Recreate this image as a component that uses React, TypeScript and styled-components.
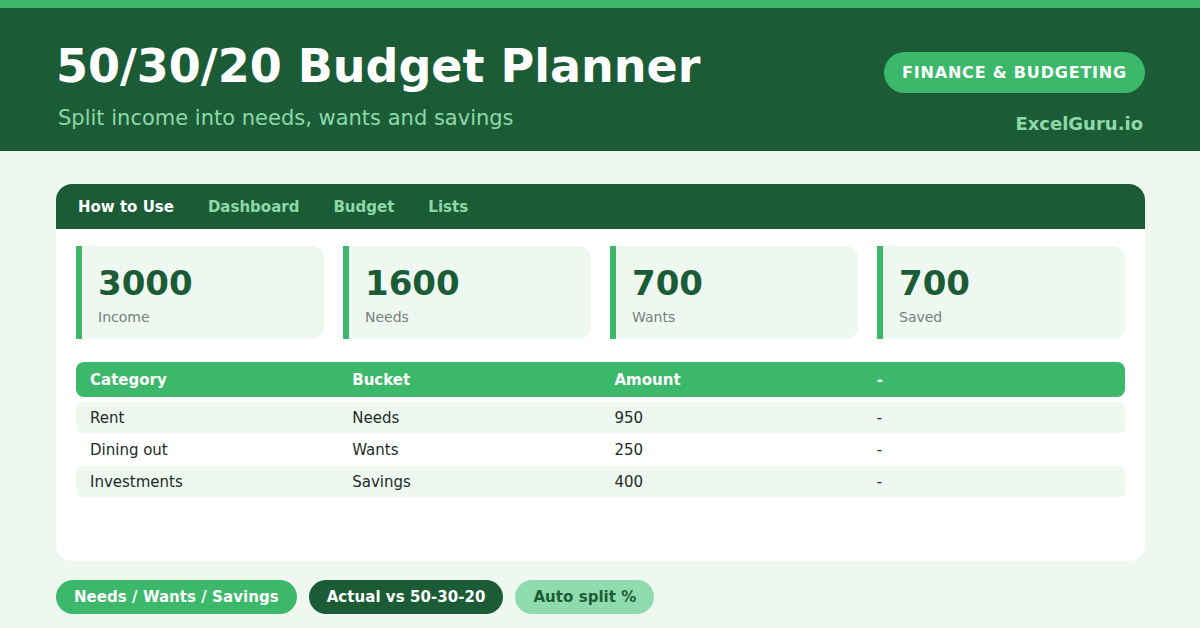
import React from "react";
import styled, { createGlobalStyle } from "styled-components";

const C = {
  dark: "#1b5c37",
  green: "#3bb86a",
  light: "#eef8f1",
  mint: "#8ed8a8",
  chipMint: "#8edcad",
  text: "#222b26",
  muted: "#74817a",
};

const Global = createGlobalStyle`
  html, body { margin: 0; padding: 0; }
  body {
    width: 1200px;
    height: 628px;
    overflow: hidden;
    background: ${C.light};
    font-family: "DejaVu Sans", "Liberation Sans", sans-serif;
  }
  * { box-sizing: border-box; }
`;

const Page = styled.div`
  width: 1200px;
  height: 628px;
  display: flex;
  flex-direction: column;
  background: ${C.light};
`;

const Stripe = styled.div`
  height: 8px;
  background: ${C.green};
`;

const Header = styled.header`
  height: 143px;
  background: ${C.dark};
  padding: 31px 55px 0 56px;
  display: flex;
  justify-content: space-between;
  align-items: flex-start;
`;

const TitleBlock = styled.div`
  display: flex;
  flex-direction: column;
`;

const Title = styled.h1`
  margin: 0;
  font-size: 46px;
  line-height: 54px;
  font-weight: 700;
  color: #ffffff;
`;

const Subtitle = styled.p`
  margin: 13px 0 0 2px;
  font-size: 21px;
  line-height: 24px;
  color: ${C.mint};
`;

const Brand = styled.div`
  margin-top: 13px;
  display: flex;
  flex-direction: column;
  align-items: flex-end;
`;

const Badge = styled.div`
  height: 41px;
  padding: 0 18px;
  border-radius: 21px;
  background: ${C.green};
  color: #ffffff;
  font-size: 16px;
  font-weight: 700;
  letter-spacing: 0.8px;
  display: flex;
  align-items: center;
`;

const Site = styled.div`
  margin-top: 20px;
  margin-right: 2px;
  font-size: 18px;
  line-height: 21px;
  font-weight: 700;
  color: ${C.mint};
`;

const Main = styled.main`
  padding: 33px 55px 0 56px;
  display: flex;
  flex-direction: column;
`;

const Card = styled.section`
  height: 377px;
  background: #ffffff;
  border-radius: 16px;
  overflow: hidden;
  display: flex;
  flex-direction: column;
`;

const Nav = styled.nav`
  height: 45px;
  background: ${C.dark};
  padding: 0 22px;
  display: flex;
  align-items: center;
  gap: 34px;
`;

const NavItem = styled.span<{ $active?: boolean }>`
  font-size: 15px;
  font-weight: 700;
  color: ${(p) => (p.$active ? "#ffffff" : C.mint)};
`;

const Body = styled.div`
  padding: 17px 20px 0 20px;
  display: flex;
  flex-direction: column;
`;

const Stats = styled.div`
  display: grid;
  grid-template-columns: repeat(4, 1fr);
  gap: 19px;
`;

const Stat = styled.div`
  height: 93px;
  background: ${C.light};
  border-left: 6px solid ${C.green};
  border-radius: 0 12px 12px 0;
  padding: 17px 16px 14px;
  display: flex;
  flex-direction: column;
`;

const StatValue = styled.div`
  font-size: 34px;
  line-height: 40px;
  font-weight: 700;
  color: ${C.dark};
`;

const StatLabel = styled.div`
  margin-top: 6px;
  font-size: 14px;
  line-height: 16px;
  color: ${C.muted};
`;

const Table = styled.div`
  margin-top: 23px;
  display: flex;
  flex-direction: column;
  gap: 1px;
`;

const HeadRow = styled.div`
  height: 35px;
  margin-bottom: 4px;
  background: ${C.green};
  border-radius: 8px;
  display: grid;
  grid-template-columns: repeat(4, 1fr);
  align-items: center;
`;

const HeadCell = styled.div`
  padding-left: 14px;
  font-size: 15px;
  font-weight: 700;
  color: #ffffff;
`;

const Row = styled.div<{ $alt?: boolean }>`
  height: 31px;
  background: ${(p) => (p.$alt ? C.light : "#ffffff")};
  border-radius: 6px;
  display: grid;
  grid-template-columns: repeat(4, 1fr);
  align-items: center;
`;

const Cell = styled.div`
  padding-left: 14px;
  font-size: 15px;
  color: ${C.text};
`;

const Chips = styled.div`
  margin-top: 19px;
  display: flex;
  gap: 12px;
`;

const Chip = styled.div<{ $bg: string; $fg: string }>`
  height: 34px;
  padding: 0 18px;
  border-radius: 17px;
  background: ${(p) => p.$bg};
  color: ${(p) => p.$fg};
  font-size: 15px;
  font-weight: 700;
  letter-spacing: 0.05px;
  display: flex;
  align-items: center;
`;

const stats = [
  { value: "3000", label: "Income" },
  { value: "1600", label: "Needs" },
  { value: "700", label: "Wants" },
  { value: "700", label: "Saved" },
];

const rows = [
  ["Rent", "Needs", "950", "-"],
  ["Dining out", "Wants", "250", "-"],
  ["Investments", "Savings", "400", "-"],
];

export default function App() {
  return (
    <>
      <Global />
      <Page>
        <Stripe />
        <Header>
          <TitleBlock>
            <Title>50/30/20 Budget Planner</Title>
            <Subtitle>Split income into needs, wants and savings</Subtitle>
          </TitleBlock>
          <Brand>
            <Badge>FINANCE &amp; BUDGETING</Badge>
            <Site>ExcelGuru.io</Site>
          </Brand>
        </Header>
        <Main>
          <Card>
            <Nav>
              <NavItem $active>How to Use</NavItem>
              <NavItem>Dashboard</NavItem>
              <NavItem>Budget</NavItem>
              <NavItem>Lists</NavItem>
            </Nav>
            <Body>
              <Stats>
                {stats.map((s) => (
                  <Stat key={s.label}>
                    <StatValue>{s.value}</StatValue>
                    <StatLabel>{s.label}</StatLabel>
                  </Stat>
                ))}
              </Stats>
              <Table>
                <HeadRow>
                  <HeadCell>Category</HeadCell>
                  <HeadCell>Bucket</HeadCell>
                  <HeadCell>Amount</HeadCell>
                  <HeadCell>-</HeadCell>
                </HeadRow>
                {rows.map((r, i) => (
                  <Row key={r[0]} $alt={i % 2 === 0}>
                    {r.map((c, j) => (
                      <Cell key={j}>{c}</Cell>
                    ))}
                  </Row>
                ))}
              </Table>
            </Body>
          </Card>
          <Chips>
            <Chip $bg={C.green} $fg="#ffffff">Needs / Wants / Savings</Chip>
            <Chip $bg={C.dark} $fg="#ffffff">Actual vs 50-30-20</Chip>
            <Chip $bg={C.chipMint} $fg={C.dark}>Auto split %</Chip>
          </Chips>
        </Main>
      </Page>
    </>
  );
}
